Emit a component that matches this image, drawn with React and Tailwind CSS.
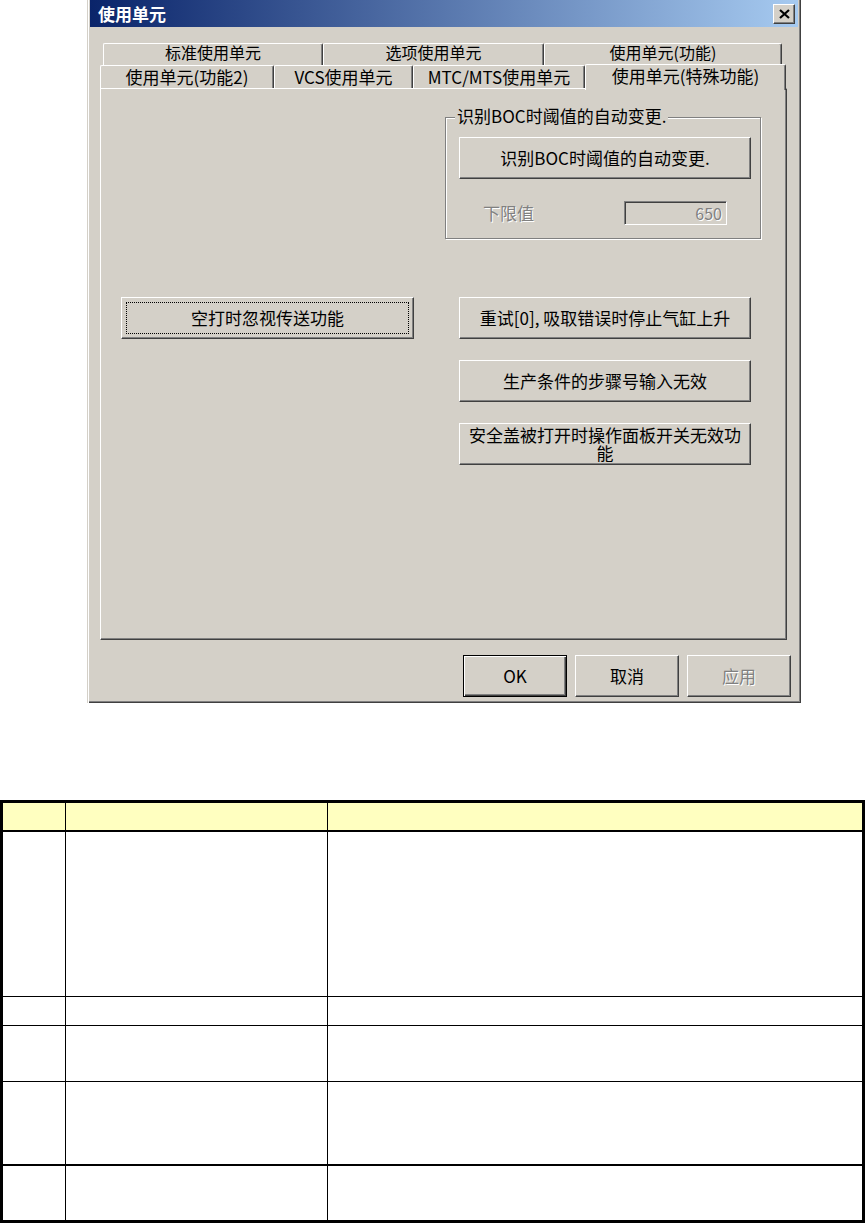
import React from "react";

const raised =
  "border border-t-white border-l-white border-r-[#404040] border-b-[#404040] shadow-[inset_-1px_-1px_0_#808080]";
const disabledText = "text-[#808080] [text-shadow:1px_1px_0_#fff]";

function Button({ children, className = "", focus = false, isDefault = false, disabled = false }) {
  const frame = isDefault
    ? "border border-black shadow-[inset_1px_1px_0_#fff,inset_-1px_-1px_0_#404040,inset_-2px_-2px_0_#808080]"
    : raised;
  return (
    <div
      className={`flex items-center justify-center bg-[#d4d0c8] text-[17px] leading-[18px] text-center ${frame} ${className} ${
        disabled ? disabledText : "text-black"
      }`}
    >
      {focus ? (
        <div className="m-[4px] flex flex-1 self-stretch items-center justify-center border border-dotted border-black">
          {children}
        </div>
      ) : (
        <div className="px-[6px]">{children}</div>
      )}
    </div>
  );
}

function BackTab({ label, className }) {
  return (
    <div
      className={`flex h-full items-center justify-center rounded-t-[2px] border-t border-l border-r border-t-white border-l-white border-r-[#404040] shadow-[inset_-1px_0_0_#808080] leading-[16px] ${className}`}
    >
      {label}
    </div>
  );
}

function Dialog() {
  return (
    <div className="ml-[87px] flex h-[703px] w-[714px] flex-col bg-[#d4d0c8] shadow-[inset_1px_0_0_#d4d0c8,inset_2px_0_0_#fff,inset_-1px_-1px_0_#404040,inset_-2px_-2px_0_#808080] font-['Noto_Sans_CJK_SC',sans-serif]">
      {/* Title bar */}
      <div className="mx-[3px] flex h-[27px] items-center justify-between bg-[linear-gradient(to_right,#0a246a,#a6caf0)] pl-[8px] pr-[3px]">
        <span className="text-[17px] font-bold leading-[18px] text-white">使用单元</span>
        <div className={`flex h-[20px] w-[22px] items-center justify-center bg-[#d4d0c8] ${raised}`}>
          <svg width="11" height="10" viewBox="0 0 11 10">
            <path d="M1 1 L10 9 M10 1 L1 9" stroke="#000" strokeWidth="2.2" fill="none" />
          </svg>
        </div>
      </div>

      {/* Tab rows */}
      <div className="ml-[16px] mt-[16px] flex h-[22px]">
        <BackTab label="标准使用单元" className="w-[220px] pb-[5px] text-[16px]" />
        <BackTab label="选项使用单元" className="w-[221px] pb-[5px] text-[16px]" />
        <BackTab label="使用单元(功能)" className="w-[238px] pb-[5px] text-[16px]" />
      </div>
      <div className="ml-[13px] flex h-[23px] items-end">
        <BackTab label="使用单元(功能2)" className="w-[174px] text-[17px]" />
        <BackTab label="VCS使用单元" className="w-[139px] text-[17px]" />
        <BackTab label="MTC/MTS使用单元" className="w-[172px] text-[17px]" />
        <div className="relative z-10 -mb-[2px] flex h-[26px] w-[201px] items-center justify-center rounded-t-[2px] border-t border-l border-r border-t-white border-l-white border-r-[#404040] bg-[#d4d0c8] pb-[3px] shadow-[inset_-1px_0_0_#808080] text-[17px] leading-[18px]">
          使用单元(特殊功能)
        </div>
      </div>

      {/* Tab page */}
      <div className="ml-[13px] flex h-[552px] w-[687px] border-t border-l border-r border-b border-t-white border-l-white border-r-[#404040] border-b-[#404040] pl-[20px] shadow-[inset_-1px_-1px_0_#808080]">
        <div className="w-[293px] pt-[208px]">
          <Button focus className="h-[42px] w-[293px]">空打时忽视传送功能</Button>
        </div>

        <div className="ml-[31px] flex flex-col pt-[28px]">
          <div className="h-[122px] w-[316px] border border-[#808080] shadow-[inset_1px_1px_0_#fff,1px_1px_0_#fff]">
            <div className="-mt-[11px] ml-[9px] w-fit bg-[#d4d0c8] px-[2px] text-[17px] leading-[18px]">
              识别BOC时阈值的自动变更.
            </div>
            <Button className="ml-[13px] mt-[12px] h-[42px] w-[292px]">识别BOC时阈值的自动变更.</Button>
            <div className="ml-[37px] mt-[22px] flex h-[24px] items-center">
              <span className={`w-[141px] text-[17px] leading-[18px] ${disabledText}`}>下限值</span>
              <div className={`flex h-[24px] w-[103px] items-center justify-end border border-t-[#808080] border-l-[#808080] border-r-white border-b-white pr-[4px] shadow-[inset_1px_1px_0_#404040] text-[16px] leading-[18px] ${disabledText}`}>
                650
              </div>
            </div>
          </div>

          <Button className="ml-[14px] mt-[58px] h-[42px] w-[292px]">重试[0], 吸取错误时停止气缸上升</Button>
          <Button className="ml-[14px] mt-[21px] h-[42px] w-[292px]">生产条件的步骤号输入无效</Button>
          <Button className="ml-[14px] mt-[21px] h-[42px] w-[292px]">安全盖被打开时操作面板开关无效功能</Button>
        </div>
      </div>

      {/* Footer buttons */}
      <div className="mt-[15px] flex justify-end gap-[8px] pr-[10px]">
        <Button isDefault className="h-[42px] w-[104px]">OK</Button>
        <Button className="h-[42px] w-[104px]">取消</Button>
        <Button disabled className="h-[42px] w-[104px]">应用</Button>
      </div>
    </div>
  );
}

function Row({ className, children }) {
  return (
    <div className={`flex border-black ${className}`}>
      <div className="w-[63px] border-r border-black" />
      <div className="w-[262px] border-r border-black" />
      <div className="flex-1">{children}</div>
    </div>
  );
}

function SpecTable() {
  return (
    <div className="mt-[97px] w-[865px] border-[3px] border-black">
      <Row className="h-[29px] border-b-2 bg-[#ffffc0]" />
      <Row className="h-[165px] border-b" />
      <Row className="h-[29px] border-b" />
      <Row className="h-[56px] border-b" />
      <Row className="h-[84px] border-b-2" />
      <Row className="h-[54px]" />
    </div>
  );
}

export default function App() {
  return (
    <div className="h-[1223px] w-[865px] overflow-hidden bg-white">
      <Dialog />
      <SpecTable />
    </div>
  );
}
